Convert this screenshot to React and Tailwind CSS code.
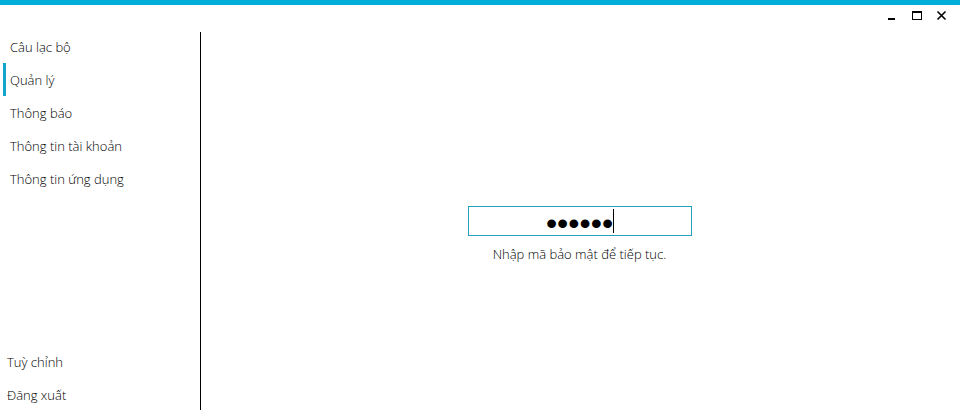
import { useState } from 'react';

const mainItems = ['Câu lạc bộ', 'Quản lý', 'Thông báo', 'Thông tin tài khoản', 'Thông tin ứng dụng'];
const footerItems = ['Tuỳ chỉnh', 'Đăng xuất'];

function WindowControls() {
  return (
    <header className="flex h-[25px] shrink-0 justify-end gap-[9px] pr-[10px] pt-[2px]">
      <button type="button" aria-label="Thu nhỏ" className="flex size-4 items-center justify-center">
        <svg width="16" height="16" viewBox="0 0 16 16" shapeRendering="crispEdges" aria-hidden="true">
          <path d="M4 11h7v2H4z" fill="#000" />
        </svg>
      </button>
      <button type="button" aria-label="Phóng to" className="flex size-4 items-center justify-center">
        <svg width="16" height="16" viewBox="0 0 16 16" shapeRendering="crispEdges" aria-hidden="true">
          <path d="M3 4h10v9H3zM4 6v6h8V6z" fill="#000" fillRule="evenodd" />
        </svg>
      </button>
      <button type="button" aria-label="Đóng" className="flex size-4 items-center justify-center">
        <svg width="16" height="16" viewBox="0 0 16 16" aria-hidden="true">
          <path d="M3.5 4.5l8 8M11.5 4.5l-8 8" stroke="#000" strokeWidth="1.6" fill="none" />
        </svg>
      </button>
    </header>
  );
}

function Sidebar() {
  const [active, setActive] = useState('Quản lý');
  return (
    <nav className="flex w-[200px] shrink-0 flex-col justify-between pb-[3px]">
      <ul className="pl-[3px]">
        {mainItems.map((item) => (
          <li key={item}>
            <button
              type="button"
              onClick={() => setActive(item)}
              className={`flex h-[33px] w-full items-center border-l-3 pl-1 text-left ${
                item === active ? 'border-[#14a5cf]' : 'border-transparent'
              }`}
            >
              {item}
            </button>
          </li>
        ))}
      </ul>
      <ul className="pl-[7px]">
        {footerItems.map((item) => (
          <li key={item}>
            <button type="button" className="flex h-[33px] w-full items-center text-left">
              {item}
            </button>
          </li>
        ))}
      </ul>
    </nav>
  );
}

function PasscodeForm() {
  const [code, setCode] = useState('123456');
  return (
    <form className="flex flex-col items-center gap-2" onSubmit={(e) => e.preventDefault()}>
      <div className="relative">
        <input
          id="passcode"
          type="password"
          autoComplete="off"
          value={code}
          onChange={(e) => setCode(e.target.value)}
          className="block h-[30px] w-56 border border-[#26a0bf] px-2 pt-1 text-center font-['DejaVu_Sans',sans-serif] text-[32px] leading-6 text-black caret-transparent outline-none"
        />
        <span className="pointer-events-none absolute inset-y-[3px] left-1/2 ml-[33px] w-px bg-black" />
      </div>
      <label htmlFor="passcode">Nhập mã bảo mật để tiếp tục.</label>
    </form>
  );
}

export default function App() {
  return (
    <div className="flex h-screen flex-col border-t-5 border-[#00aed9] bg-white font-['Open_Sans','Noto_Sans',sans-serif] text-[13px] leading-5 font-light text-black">
      <WindowControls />
      <div className="flex min-h-0 flex-1">
        <Sidebar />
        <main className="mb-1 mt-[2px] flex flex-1 items-center justify-center border-l border-black pt-7 pr-[2px]">
          <PasscodeForm />
        </main>
      </div>
    </div>
  );
}
